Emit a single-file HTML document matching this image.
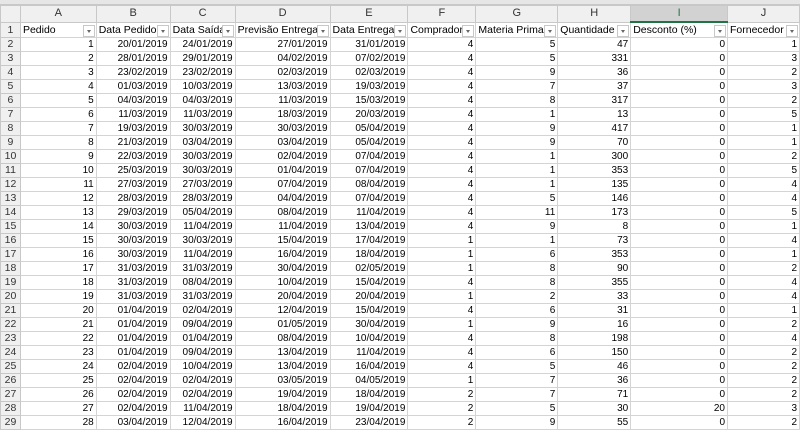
<!DOCTYPE html>
<html><head><meta charset="utf-8"><style>
html,body{margin:0;padding:0;background:#fff;width:800px;height:423px;overflow:hidden;}
.top{position:absolute;left:0;top:0;width:800px;height:4px;background:#e6e6e6;border-bottom:1px solid #c8c8c8;}
table{position:absolute;left:0;top:5px;border-collapse:collapse;table-layout:fixed;font-family:"Liberation Sans",sans-serif;font-size:10px;color:#000;}
td{border:1px solid #d4d4d4;padding:0 2px;height:13px;line-height:13px;white-space:nowrap;overflow:hidden;text-align:right;box-sizing:border-box;}
tr{height:14px;}
tr.h{height:16px;}
tr.h td{background:#f0f0f0;text-align:center;height:16px;line-height:15px;border-color:#c8c8c8;color:#333;font-size:11px;}
tr.h td.sel{background:#d2d2d2;border-bottom:2px solid #217346;color:#217346;}
td.rn{background:#f0f0f0;text-align:center;color:#333;border-color:#c8c8c8;padding:0;font-size:10.5px;}
tr.f{height:15px;}
tr.f td{text-align:left;height:15px;line-height:14px;position:relative;font-size:10.5px;}
tr.f td.rn{text-align:center;}
tr.f td span.b{position:absolute;right:1px;top:2px;width:10px;height:10px;border:1px solid #c8c8c8;background:#fff;}
tr.f td span.b:after{content:"";position:absolute;left:3px;top:4px;border-left:2px solid transparent;border-right:2px solid transparent;border-top:3px solid #666;}
</style></head><body>
<div class="top"></div>
<table>
<colgroup><col style="width:20px"><col style="width:76px"><col style="width:74px"><col style="width:65px"><col style="width:95px"><col style="width:78px"><col style="width:68px"><col style="width:82px"><col style="width:73px"><col style="width:97px"><col style="width:72px"></colgroup>
<tr class="h"><td></td><td>A</td><td>B</td><td>C</td><td>D</td><td>E</td><td>F</td><td>G</td><td>H</td><td class="sel">I</td><td>J</td></tr>
<tr class="f"><td class="rn">1</td><td>Pedido<span class="b"></span></td><td>Data Pedido<span class="b"></span></td><td>Data Saída<span class="b"></span></td><td>Previsão Entrega<span class="b"></span></td><td>Data Entrega<span class="b"></span></td><td>Comprador<span class="b"></span></td><td>Materia Prima<span class="b"></span></td><td>Quantidade<span class="b"></span></td><td>Desconto (%)<span class="b"></span></td><td>Fornecedor<span class="b"></span></td></tr>
<tr><td class="rn">2</td><td>1</td><td>20/01/2019</td><td>24/01/2019</td><td>27/01/2019</td><td>31/01/2019</td><td>4</td><td>5</td><td>47</td><td>0</td><td>1</td></tr>
<tr><td class="rn">3</td><td>2</td><td>28/01/2019</td><td>29/01/2019</td><td>04/02/2019</td><td>07/02/2019</td><td>4</td><td>5</td><td>331</td><td>0</td><td>3</td></tr>
<tr><td class="rn">4</td><td>3</td><td>23/02/2019</td><td>23/02/2019</td><td>02/03/2019</td><td>02/03/2019</td><td>4</td><td>9</td><td>36</td><td>0</td><td>2</td></tr>
<tr><td class="rn">5</td><td>4</td><td>01/03/2019</td><td>10/03/2019</td><td>13/03/2019</td><td>19/03/2019</td><td>4</td><td>7</td><td>37</td><td>0</td><td>3</td></tr>
<tr><td class="rn">6</td><td>5</td><td>04/03/2019</td><td>04/03/2019</td><td>11/03/2019</td><td>15/03/2019</td><td>4</td><td>8</td><td>317</td><td>0</td><td>2</td></tr>
<tr><td class="rn">7</td><td>6</td><td>11/03/2019</td><td>11/03/2019</td><td>18/03/2019</td><td>20/03/2019</td><td>4</td><td>1</td><td>13</td><td>0</td><td>5</td></tr>
<tr><td class="rn">8</td><td>7</td><td>19/03/2019</td><td>30/03/2019</td><td>30/03/2019</td><td>05/04/2019</td><td>4</td><td>9</td><td>417</td><td>0</td><td>1</td></tr>
<tr><td class="rn">9</td><td>8</td><td>21/03/2019</td><td>03/04/2019</td><td>03/04/2019</td><td>05/04/2019</td><td>4</td><td>9</td><td>70</td><td>0</td><td>1</td></tr>
<tr><td class="rn">10</td><td>9</td><td>22/03/2019</td><td>30/03/2019</td><td>02/04/2019</td><td>07/04/2019</td><td>4</td><td>1</td><td>300</td><td>0</td><td>2</td></tr>
<tr><td class="rn">11</td><td>10</td><td>25/03/2019</td><td>30/03/2019</td><td>01/04/2019</td><td>07/04/2019</td><td>4</td><td>1</td><td>353</td><td>0</td><td>5</td></tr>
<tr><td class="rn">12</td><td>11</td><td>27/03/2019</td><td>27/03/2019</td><td>07/04/2019</td><td>08/04/2019</td><td>4</td><td>1</td><td>135</td><td>0</td><td>4</td></tr>
<tr><td class="rn">13</td><td>12</td><td>28/03/2019</td><td>28/03/2019</td><td>04/04/2019</td><td>07/04/2019</td><td>4</td><td>5</td><td>146</td><td>0</td><td>4</td></tr>
<tr><td class="rn">14</td><td>13</td><td>29/03/2019</td><td>05/04/2019</td><td>08/04/2019</td><td>11/04/2019</td><td>4</td><td>11</td><td>173</td><td>0</td><td>5</td></tr>
<tr><td class="rn">15</td><td>14</td><td>30/03/2019</td><td>11/04/2019</td><td>11/04/2019</td><td>13/04/2019</td><td>4</td><td>9</td><td>8</td><td>0</td><td>1</td></tr>
<tr><td class="rn">16</td><td>15</td><td>30/03/2019</td><td>30/03/2019</td><td>15/04/2019</td><td>17/04/2019</td><td>1</td><td>1</td><td>73</td><td>0</td><td>4</td></tr>
<tr><td class="rn">17</td><td>16</td><td>30/03/2019</td><td>11/04/2019</td><td>16/04/2019</td><td>18/04/2019</td><td>1</td><td>6</td><td>353</td><td>0</td><td>1</td></tr>
<tr><td class="rn">18</td><td>17</td><td>31/03/2019</td><td>31/03/2019</td><td>30/04/2019</td><td>02/05/2019</td><td>1</td><td>8</td><td>90</td><td>0</td><td>2</td></tr>
<tr><td class="rn">19</td><td>18</td><td>31/03/2019</td><td>08/04/2019</td><td>10/04/2019</td><td>15/04/2019</td><td>4</td><td>8</td><td>355</td><td>0</td><td>4</td></tr>
<tr><td class="rn">20</td><td>19</td><td>31/03/2019</td><td>31/03/2019</td><td>20/04/2019</td><td>20/04/2019</td><td>1</td><td>2</td><td>33</td><td>0</td><td>4</td></tr>
<tr><td class="rn">21</td><td>20</td><td>01/04/2019</td><td>02/04/2019</td><td>12/04/2019</td><td>15/04/2019</td><td>4</td><td>6</td><td>31</td><td>0</td><td>1</td></tr>
<tr><td class="rn">22</td><td>21</td><td>01/04/2019</td><td>09/04/2019</td><td>01/05/2019</td><td>30/04/2019</td><td>1</td><td>9</td><td>16</td><td>0</td><td>2</td></tr>
<tr><td class="rn">23</td><td>22</td><td>01/04/2019</td><td>01/04/2019</td><td>08/04/2019</td><td>10/04/2019</td><td>4</td><td>8</td><td>198</td><td>0</td><td>4</td></tr>
<tr><td class="rn">24</td><td>23</td><td>01/04/2019</td><td>09/04/2019</td><td>13/04/2019</td><td>11/04/2019</td><td>4</td><td>6</td><td>150</td><td>0</td><td>2</td></tr>
<tr><td class="rn">25</td><td>24</td><td>02/04/2019</td><td>10/04/2019</td><td>13/04/2019</td><td>16/04/2019</td><td>4</td><td>5</td><td>46</td><td>0</td><td>2</td></tr>
<tr><td class="rn">26</td><td>25</td><td>02/04/2019</td><td>02/04/2019</td><td>03/05/2019</td><td>04/05/2019</td><td>1</td><td>7</td><td>36</td><td>0</td><td>2</td></tr>
<tr><td class="rn">27</td><td>26</td><td>02/04/2019</td><td>02/04/2019</td><td>19/04/2019</td><td>18/04/2019</td><td>2</td><td>7</td><td>71</td><td>0</td><td>2</td></tr>
<tr><td class="rn">28</td><td>27</td><td>02/04/2019</td><td>11/04/2019</td><td>18/04/2019</td><td>19/04/2019</td><td>2</td><td>5</td><td>30</td><td>20</td><td>3</td></tr>
<tr><td class="rn">29</td><td>28</td><td>03/04/2019</td><td>12/04/2019</td><td>16/04/2019</td><td>23/04/2019</td><td>2</td><td>9</td><td>55</td><td>0</td><td>2</td></tr>
</table>
</body></html>
